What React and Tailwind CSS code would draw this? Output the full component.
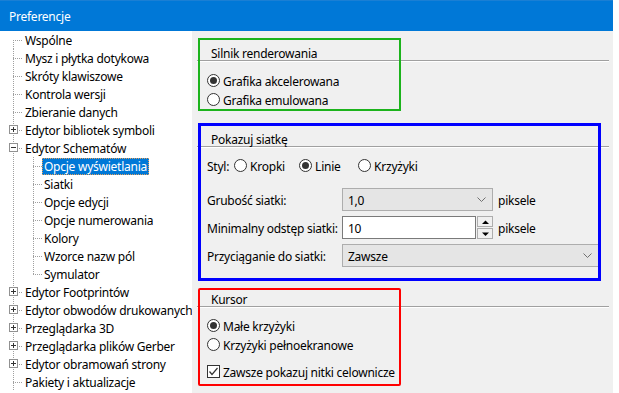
import React from 'react'

const tree = [
    { label: 'Wspólne', level: 0 },
    { label: 'Mysz i płytka dotykowa', level: 0 },
    { label: 'Skróty klawiszowe', level: 0 },
    { label: 'Kontrola wersji', level: 0 },
    { label: 'Zbieranie danych', level: 0 },
    { label: 'Edytor bibliotek symboli', level: 0, box: 'plus' },
    { label: 'Edytor Schematów', level: 0, box: 'minus' },
    { label: 'Opcje wyświetlania', level: 1, selected: true },
    { label: 'Siatki', level: 1 },
    { label: 'Opcje edycji', level: 1 },
    { label: 'Opcje numerowania', level: 1 },
    { label: 'Kolory', level: 1 },
    { label: 'Wzorce nazw pól', level: 1 },
    { label: 'Symulator', level: 1, last: true },
    { label: 'Edytor Footprintów', level: 0, box: 'plus' },
    { label: 'Edytor obwodów drukowanych', level: 0, box: 'plus' },
    { label: 'Przeglądarka 3D', level: 0, box: 'plus' },
    { label: 'Przeglądarka plików Gerber', level: 0, box: 'plus' },
    { label: 'Edytor obramowań strony', level: 0, box: 'plus' },
    { label: 'Pakiety i aktualizacje', level: 0 },
]

// dotted connector drawing for one tree row cell
function Guide({ width, x, first, last, stub, box }) {
    return (
        <svg width={width} height="18" className="shrink-0" shapeRendering="crispEdges">
            <line x1={x + 0.5} x2={x + 0.5} y1={first ? 9 : 0} y2={last ? 9 : 18} stroke="#a0a0a0" strokeDasharray="1 1" />
            {stub && <line x1={x} x2={x + 9} y1="9.5" y2="9.5" stroke="#a0a0a0" strokeDasharray="1 1" />}
            {box && (
                <g>
                    <rect x={x - 4 + 0.5} y="4.5" width="8" height="8" fill="#fff" stroke="#919191" />
                    <line x1={x - 2} x2={x + 3} y1="8.5" y2="8.5" stroke="#333" />
                    {box === 'plus' && <line x1={x + 0.5} x2={x + 0.5} y1="6" y2="11" stroke="#333" />}
                </g>
            )}
        </svg>
    )
}

function TreeRow({ item, index }) {
    return (
        <div className="flex h-[18px] items-center">
            {item.level === 0 ? (
                <Guide width={23} x={13} first={index === 0} stub box={item.box} />
            ) : (
                <>
                    <Guide width={23} x={13} />
                    <Guide width={19} x={10} last={item.last} stub />
                </>
            )}
            <span
                className={`px-[2px] h-[17px] pt-[1px] leading-[16px] whitespace-nowrap ${item.selected ? 'bg-[#0078d7] text-white outline-1 outline-dotted outline-[#e0a060] -outline-offset-1' : 'text-black'}`}
            >
                {item.label}
            </span>
        </div>
    )
}

function Radio({ checked, label, className = '' }) {
    return (
        <label className={`flex items-center gap-[3px] h-[19px] whitespace-nowrap ${className}`}>
            <span className="w-[13px] h-[13px] rounded-full border border-[#333] bg-white flex items-center justify-center">
                {checked && <span className="w-[7px] h-[7px] rounded-full bg-[#333]" />}
            </span>
            <span className="pt-[2px]">{label}</span>
        </label>
    )
}

function Group({ title, className = '', children }) {
    return (
        <div className={`ml-[5px] mr-[4px] ${className}`}>
            <div className="pl-[14px] h-[17px] pt-[2px] leading-[15px] border-b border-[#a0a0a0]">{title}</div>
            <div className="h-px bg-white" />
            {children}
        </div>
    )
}

function Chevron() {
    return (
        <svg width="9" height="5" viewBox="0 0 9 5" fill="none">
            <path d="M0.5 0.5 L4.5 4.5 L8.5 0.5" stroke="#707070" />
        </svg>
    )
}

function Combo({ value, className = '' }) {
    return (
        <div className={`h-[23px] bg-[#e5e5e5] border border-[#adadad] flex items-center justify-between pl-[5px] pr-[6px] ${className}`}>
            <span className="pt-[2px]">{value}</span>
            <Chevron />
        </div>
    )
}

function Spin() {
    return (
        <div className="flex flex-col gap-px ml-px">
            {['M1 5 L4.5 1.5 L8 5 Z', 'M1 1.5 L4.5 5 L8 1.5 Z'].map((d) => (
                <div key={d} className="w-[16px] h-[11px] border border-[#adadad] bg-[#f0f0f0] flex items-center justify-center">
                    <svg width="9" height="6" viewBox="0 0 9 6"><path d={d} fill="#000" /></svg>
                </div>
            ))}
        </div>
    )
}

export default function App() {
    return (
        <div className="w-[619px] h-[393px] bg-white overflow-hidden text-[12px] tracking-[-0.25px] text-black" style={{ fontFamily: '"Noto Sans", "Liberation Sans", sans-serif' }}>
            <div className="w-[613px] h-full flex flex-col bg-[#f0f0f0]">
                {/* Title bar */}
                <div className="h-[31px] shrink-0 bg-[#0078d7] border-t border-[#1a7fd4] text-white flex items-center pl-[9px] pt-[2px]">
                    Preferencje
                </div>

                <div className="relative flex flex-1 min-h-0">
                    {/* Tree */}
                    <div className="w-[192px] shrink-0 bg-white overflow-hidden">
                        {tree.map((item, i) => (
                            <TreeRow key={item.label} item={item} index={i} />
                        ))}
                    </div>

                    {/* Settings */}
                    <div className="flex-1">
                        <Group title="Silnik renderowania" className="mt-[13px]">
                            <div className="pl-[10px] pt-[9px]">
                                <Radio checked label="Grafika akcelerowana" />
                                <Radio label="Grafika emulowana" />
                            </div>
                        </Group>

                        <Group title="Pokazuj siatkę" className="mt-[21px]">
                            <div className="pl-[10px] pt-[8px]">
                                <div className="flex items-center h-[19px]">
                                    <span className="mr-[5px] pt-[2px]">Styl:</span>
                                    <Radio label="Kropki" className="w-[65px]" />
                                    <Radio checked label="Linie" className="w-[59px]" />
                                    <Radio label="Krzyżyki" />
                                </div>
                                <div className="mt-[13px] grid grid-cols-[135px_1fr] gap-y-[5px] items-center pr-[10px]">
                                    <span className="whitespace-nowrap pt-[2px]">Grubość siatki:</span>
                                    <div className="flex items-center">
                                        <Combo value="1,0" className="w-[151px]" />
                                        <span className="ml-[5px] pt-[2px]">piksele</span>
                                    </div>
                                    <span className="whitespace-nowrap pt-[2px]">Minimalny odstęp siatki:</span>
                                    <div className="flex items-center">
                                        <div className="flex items-center">
                                            <div className="w-[134px] h-[23px] bg-white border border-[#7a7a7a] flex items-center pl-[5px] pt-[2px]">10</div>
                                            <Spin />
                                        </div>
                                        <span className="ml-[5px] pt-[2px]">piksele</span>
                                    </div>
                                    <span className="whitespace-nowrap pt-[2px]">Przyciąganie do siatki:</span>
                                    <Combo value="Zawsze" className="w-[257px]" />
                                </div>
                            </div>
                        </Group>

                        <Group title="Kursor" className="mt-[23px]">
                            <div className="pl-[10px] pt-[8px]">
                                <Radio checked label="Małe krzyżyki" />
                                <Radio label="Krzyżyki pełnoekranowe" />
                                <label className="mt-[8px] flex items-center gap-[3px] h-[19px] whitespace-nowrap">
                                    <span className="w-[13px] h-[13px] border border-[#333] bg-white flex items-center justify-center">
                                        <svg width="11" height="11" viewBox="0 0 11 11" fill="none">
                                            <path d="M1.5 5.5 L4 8.5 L9.5 2" stroke="#333" strokeWidth="1.2" />
                                        </svg>
                                    </span>
                                    <span className="pt-[2px]">Zawsze pokazuj nitki celownicze</span>
                                </label>
                            </div>
                        </Group>
                    </div>

                    {/* Annotation frames */}
                    <div className="absolute left-[198px] top-[7px] w-[203px] h-[73px] border-2 border-[#1cb31c] pointer-events-none" />
                    <div className="absolute left-[198px] top-[92px] w-[403px] h-[158px] border-[3px] border-[#0000ff] pointer-events-none" />
                    <div className="absolute left-[198px] top-[257px] w-[203px] h-[98px] border-2 border-[#ff0000] rounded-[2px] pointer-events-none" />
                </div>
            </div>
        </div>
    )
}
